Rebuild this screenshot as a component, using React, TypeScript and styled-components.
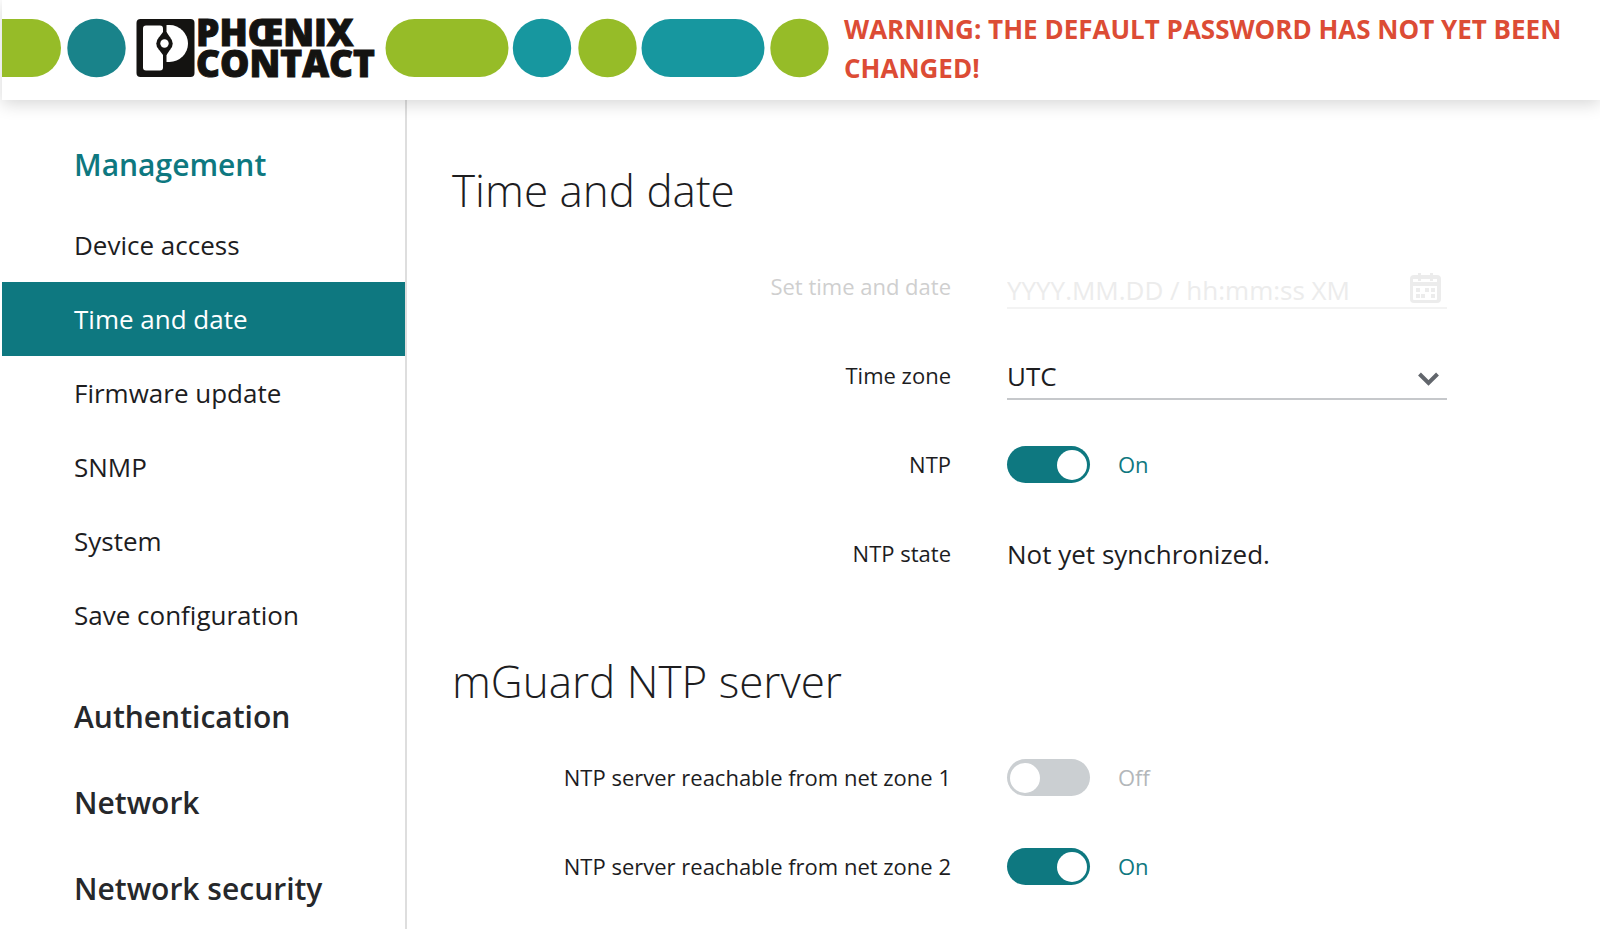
import React, { useId, useState } from "react";
import styled, { createGlobalStyle, css } from "styled-components";

const teal = "#0e7880";
const ink = "#1d1d1f";
const green = "#96bc28";
const black = "#141311";

const GlobalStyle = createGlobalStyle`
  *, *::before, *::after { box-sizing: border-box; }
  body {
    margin: 0;
    background: #fff;
    color: ${ink};
    font-family: "Open Sans", "Noto Sans", sans-serif;
    font-size: 26px;
    overflow-x: hidden;
  }
`;

const Page = styled.div`
  display: flex;
  flex-direction: column;
  min-height: 100vh;
  padding-left: 2px;
`;

const Header = styled.header`
  position: relative;
  z-index: 1;
  display: flex;
  align-items: center;
  gap: 15px;
  min-height: 100px;
  padding: 0 16px 4px 0;
  background: #fff;
  box-shadow: 0 4px 16px rgba(0, 0, 0, 0.16);
`;

const Banner = styled.svg`
  flex: none;
  overflow: visible;
`;

const BrandText = styled.text`
  font-family: "Open Sans", sans-serif;
  font-size: 37px;
  font-weight: 800;
  fill: ${black};
  stroke: ${black};
  stroke-width: 1px;
`;

const Warning = styled.p`
  margin: 0;
  padding-top: 2px;
  color: #dc4c35;
  font-weight: 700;
  font-size: 26px;
  line-height: 39px;
`;

const Body = styled.div`
  flex: 1;
  display: flex;
`;

const Sidebar = styled.nav`
  flex: none;
  width: 405px;
  padding-top: 28px;
  border-right: 2px solid #dedede;
`;

const NavHeading = styled.h2<{ $active?: boolean }>`
  margin: 0;
  padding-left: 72px;
  font-size: 30px;
  font-weight: 600;
  line-height: 74px;
  color: ${(p) => (p.$active ? teal : "#26282b")};
`;

const NavList = styled.ul`
  margin: 6px 0 28px;
  padding: 0;
  list-style: none;
`;

const NavGroups = styled.div`
  display: flex;
  flex-direction: column;
  gap: 12px;
`;

const NavLink = styled.a<{ $active?: boolean }>`
  display: block;
  padding-left: 72px;
  font-size: 26px;
  line-height: 74px;
  text-decoration: none;
  color: ${ink};
  ${(p) => p.$active && css`
    background: ${teal};
    color: #fff;
  `}
`;

const HeadingLink = styled.a`
  color: inherit;
  text-decoration: none;
`;

const Main = styled.main`
  flex: 1;
  min-width: 0;
  padding: 60px 153px 16px 45px;
`;

const Section = styled.section`
  & + & { margin-top: 53px; }
`;

const Title = styled.h1`
  margin: 0 0 22px;
  font-size: 44px;
  font-weight: 300;
  line-height: 60px;
`;

const Row = styled.div`
  display: grid;
  grid-template-columns: 1fr minmax(0, 440px);
  column-gap: 56px;
  align-items: center;
  height: 89px;
`;

const Label = styled.label<{ $disabled?: boolean }>`
  padding-bottom: 2px;
  text-align: right;
  font-size: 22px;
  line-height: 32px;
  color: ${(p) => (p.$disabled ? "#cfcfcf" : ink)};
`;

const Field = styled.div<{ $disabled?: boolean }>`
  position: relative;
  display: flex;
  align-items: center;
  height: ${(p) => (p.$disabled ? 44 : 48)}px;
  border-bottom: 2px solid ${(p) => (p.$disabled ? "#f3f3f3" : "#c6c8cb")};
`;

const FieldIcon = styled.svg`
  position: absolute;
  right: 6px;
  bottom: 3px;
  pointer-events: none;
`;

const control = css`
  width: 100%;
  height: 100%;
  border: 0;
  background: transparent;
  font: inherit;
  font-size: 26px;
  color: ${ink};
`;

const TextInput = styled.input`
  ${control}
  padding: 8px 0 0;
  &::placeholder { color: #ececec; opacity: 1; }
`;

const Select = styled.select`
  ${control}
  padding: 2px 0 0;
  appearance: none;
`;

const Output = styled.output`
  font-size: 26px;
  line-height: 36px;
`;

const SwitchField = styled.div`
  display: flex;
  align-items: center;
  gap: 28px;
`;

const Switch = styled.input`
  appearance: none;
  flex: none;
  width: 83px;
  height: 37px;
  margin: 0;
  padding: 0 3px;
  border-radius: 19px;
  background: #cbcfd2;
  display: flex;
  align-items: center;
  &::before {
    content: "";
    width: 30px;
    height: 30px;
    border-radius: 50%;
    background: #fff;
  }
  &:checked {
    background: ${teal};
    justify-content: flex-end;
  }
`;

const SwitchState = styled.span<{ $on: boolean }>`
  padding-bottom: 2px;
  font-size: 22px;
  line-height: 32px;
  color: ${(p) => (p.$on ? teal : "#b3b7ba")};
`;

function BrandBanner() {
  return (
    <Banner width="827" height="60" viewBox="0 0 827 60" role="img" aria-label="Phoenix Contact">
      <path d="M0 1h30a29 29 0 0 1 0 58H0z" fill={green} />
      <circle cx="94.500" cy="30" r="29.200" fill="#19838a" />
      <rect x="134.500" y="1" width="58" height="58" rx="4" fill={black} />
      <rect x="141" y="7.500" width="20" height="45" rx="3" fill="#fff" />
      <path d="M164.500 7h3a18.500 18.500 0 0 1 0 37h-3z" fill="#fff" />
      <path d="M161 14h3.500l4 6h-12zM156.500 31h12l-4 6H161z" fill={black} />
      <circle cx="162.500" cy="25.500" r="8.200" fill={black} />
      <circle cx="162.500" cy="25.500" r="4.200" fill="#fff" />
      <BrandText x="194" y="28">PHŒNIX</BrandText>
      <BrandText x="194" y="59">CONTACT</BrandText>
      <rect x="383.500" y="1" width="123" height="58" rx="29" fill={green} />
      <circle cx="540" cy="30" r="29.200" fill="#17979f" />
      <circle cx="605.500" cy="30" r="29.200" fill={green} />
      <rect x="639.500" y="1" width="123" height="58" rx="29" fill="#17979f" />
      <circle cx="797.500" cy="30" r="29.200" fill={green} />
    </Banner>
  );
}

function SwitchRow({ label, initial }: { label: string; initial: boolean }) {
  const id = useId();
  const [on, setOn] = useState(initial);
  return (
    <Row>
      <Label htmlFor={id}>{label}</Label>
      <SwitchField>
        <Switch
          id={id}
          type="checkbox"
          role="switch"
          checked={on}
          onChange={(e) => setOn(e.target.checked)}
        />
        <SwitchState $on={on}>{on ? "On" : "Off"}</SwitchState>
      </SwitchField>
    </Row>
  );
}

const managementPages = [
  "Device access",
  "Time and date",
  "Firmware update",
  "SNMP",
  "System",
  "Save configuration",
];

export default function App() {
  return (
    <>
      <GlobalStyle />
      <Page>
        <Header>
          <BrandBanner />
          <Warning role="alert">
            WARNING: THE DEFAULT PASSWORD HAS NOT YET BEEN CHANGED!
          </Warning>
        </Header>
        <Body>
          <Sidebar>
            <NavHeading $active>Management</NavHeading>
            <NavList>
              {managementPages.map((name) => (
                <li key={name}>
                  <NavLink href="#" $active={name === "Time and date"}>{name}</NavLink>
                </li>
              ))}
            </NavList>
            <NavGroups>
              {["Authentication", "Network", "Network security"].map((name) => (
                <NavHeading key={name}>
                  <HeadingLink href="#">{name}</HeadingLink>
                </NavHeading>
              ))}
            </NavGroups>
          </Sidebar>
          <Main>
            <Section>
              <Title>Time and date</Title>
              <Row>
                <Label htmlFor="datetime" $disabled>Set time and date</Label>
                <Field $disabled>
                  <TextInput id="datetime" disabled placeholder="YYYY.MM.DD / hh:mm:ss XM" />
                  <FieldIcon width="31" height="31" viewBox="0 0 31 31" fill="#ececec">
                    <path
                      fillRule="evenodd"
                      d="M4 2h4V0h3v2h9V0h3v2h4q4 0 4 4v20q0 4-4 4H4q-4 0-4-4V6q0-4 4-4zM3 13v13q0 1 1 1h22q1 0 1-1V13zM3 6v3h24V6h-4v2h-3V6h-9v2H8V6z"
                    />
                    <path d="M6 15h4v4H6zM15 15h4v4h-4zM21 15h4v4h-4zM6 21h4v4H6zM11 21h4v4h-4zM21 21h4v4h-4z" />
                  </FieldIcon>
                </Field>
              </Row>
              <Row>
                <Label htmlFor="timezone">Time zone</Label>
                <Field>
                  <Select id="timezone" defaultValue="UTC">
                    <option>UTC</option>
                  </Select>
                  <FieldIcon width="25" height="31" viewBox="0 0 25 31" fill="none">
                    <path d="M3.500 10l9 9 9-9" stroke="#62666c" strokeWidth="4" />
                  </FieldIcon>
                </Field>
              </Row>
              <SwitchRow label="NTP" initial />
              <Row>
                <Label htmlFor="ntpstate">NTP state</Label>
                <Output id="ntpstate">Not yet synchronized.</Output>
              </Row>
            </Section>
            <Section>
              <Title as="h2">mGuard NTP server</Title>
              <SwitchRow label="NTP server reachable from net zone 1" initial={false} />
              <SwitchRow label="NTP server reachable from net zone 2" initial />
            </Section>
          </Main>
        </Body>
      </Page>
    </>
  );
}
